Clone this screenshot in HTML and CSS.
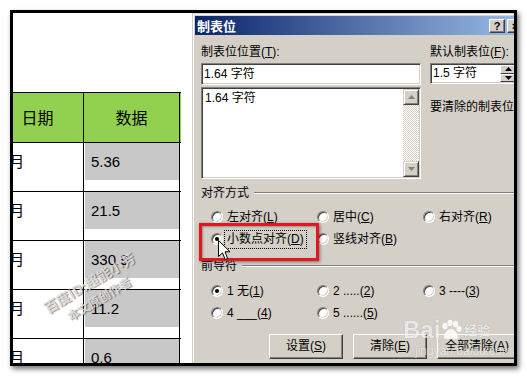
FILE: index.html
```html
<!DOCTYPE html>
<html lang="zh-CN">
<head>
    <meta charset="UTF-8">
    <title>制表位</title>
    <link rel="stylesheet" href="styles.css">
</head>
<body>
    <div class="frame">
        <div class="doc">
            <div class="sheet">
                <div class="row head">
                    <div class="c1">日期</div>
                    <div class="c2">数据</div>
                </div>
                <div class="row">
                    <div class="c1">1月</div>
                    <div class="c2"><div class="val">5.36</div></div>
                </div>
                <div class="row">
                    <div class="c1">2月</div>
                    <div class="c2"><div class="val">21.5</div></div>
                </div>
                <div class="row">
                    <div class="c1">3月</div>
                    <div class="c2"><div class="val">330.9</div></div>
                </div>
                <div class="row">
                    <div class="c1">4月</div>
                    <div class="c2"><div class="val">11.2</div></div>
                </div>
                <div class="row">
                    <div class="c1">5月</div>
                    <div class="c2"><div class="val">0.6</div></div>
                </div>
            </div>
        </div>

        <div class="dialog">
            <div class="titlebar">
                <span class="title">制表位</span>
                <span class="tb-btns">
                    <span class="tb-btn">?</span>
                    <span class="tb-btn">×</span>
                </span>
            </div>
            <div class="body">
                <div class="top">
                    <div class="col-left">
                        <div class="label">制表位位置(<u>T</u>):</div>
                        <div class="field">1.64 字符</div>
                        <div class="list">
                            <div class="list-items">
                                <div class="item">1.64 字符</div>
                            </div>
                            <div class="scroll">
                                <div class="sbtn">
                                    <svg width="7" height="4" viewBox="0 0 7 4"><path d="M3.5 0 L7 4 L0 4 Z" fill="#808080"/></svg>
                                </div>
                                <div class="track"></div>
                                <div class="sbtn">
                                    <svg width="7" height="4" viewBox="0 0 7 4"><path d="M0 0 L7 0 L3.5 4 Z" fill="#808080"/></svg>
                                </div>
                            </div>
                        </div>
                    </div>
                    <div class="col-right">
                        <div class="label">默认制表位(<u>F</u>):</div>
                        <div class="field spin">
                            <span class="spin-text">1.5 字符</span>
                            <span class="spin-btns">
                                <span class="spin-btn">
                                    <svg width="7" height="4" viewBox="0 0 7 4"><path d="M3.5 0 L7 4 L0 4 Z" fill="#000"/></svg>
                                </span>
                                <span class="spin-btn">
                                    <svg width="7" height="4" viewBox="0 0 7 4"><path d="M0 0 L7 0 L3.5 4 Z" fill="#000"/></svg>
                                </span>
                            </span>
                        </div>
                        <div class="label clear-label">要清除的制表位:</div>
                    </div>
                </div>

                <div class="group first"><span>对齐方式</span><i class="rule"></i></div>
                <div class="radios">
                    <label class="opt"><span class="radio"></span><span>左对齐(<u>L</u>)</span></label>
                    <label class="opt"><span class="radio"></span><span>居中(<u>C</u>)</span></label>
                    <label class="opt"><span class="radio"></span><span>右对齐(<u>R</u>)</span></label>
                    <label class="opt"><span class="radio on"></span><span class="focus">小数点对齐(<u>D</u>)</span></label>
                    <label class="opt"><span class="radio"></span><span>竖线对齐(<u>B</u>)</span></label>
                </div>

                <div class="group"><span>前导符</span><i class="rule"></i></div>
                <div class="radios leaders">
                    <label class="opt"><span class="radio on"></span><span>1 无(<u>1</u>)</span></label>
                    <label class="opt"><span class="radio"></span><span>2 .....(<u>2</u>)</span></label>
                    <label class="opt"><span class="radio"></span><span>3 ----(<u>3</u>)</span></label>
                    <label class="opt"><span class="radio"></span><span>4 ___(<u>4</u>)</span></label>
                    <label class="opt"><span class="radio"></span><span>5 ......(<u>5</u>)</span></label>
                </div>

                <div class="buttons">
                    <span class="btn">设置(<u>S</u>)</span>
                    <span class="btn">清除(<u>E</u>)</span>
                    <span class="btn wide">全部清除(<u>A</u>)</span>
                </div>
            </div>
        </div>

        <!-- overlays: screenshot annotations -->
        <div class="highlight"></div>
        <svg class="cursor" width="13" height="21" viewBox="0 0 13 21">
            <path d="M0.5 0.5 L0.5 16.5 L4.5 12.8 L7.2 19.5 L9.6 18.5 L7 11.8 L12 11.8 Z" fill="#fff" stroke="#000" stroke-width="1"/>
        </svg>
        <div class="mark">百度ID:超能小芳<br><span class="mark-sub">本文原创作者</span></div>
        <div class="baidu">
            <div class="baidu-logo">Bai<svg width="22" height="22" viewBox="0 0 22 22"><g fill="#fff"><ellipse cx="5" cy="7" rx="2.6" ry="3.2"/><ellipse cx="10" cy="4" rx="2.6" ry="3.2"/><ellipse cx="15.5" cy="5" rx="2.6" ry="3.2"/><ellipse cx="19" cy="10" rx="2.4" ry="3"/><path d="M11 10 C7 10 4 15 4 18 C4 21 8 20 11 20 C14 20 18 21 18 18 C18 15 15 10 11 10 Z"/></g></svg><span class="baidu-jy">经验</span></div>
            <div class="baidu-url">jingyan.baidu.com</div>
        </div>
    </div>
</body>
</html>
```

FILE: styles.css
```css
body {
    margin: 0;
    padding: 10px;
    background: #fff;
    font-family: "Liberation Sans", "Noto Sans CJK SC", sans-serif;
}
.frame {
    position: relative;
    display: flex;
    width: 501px;
    height: 350px;
    border: 3px solid #000;
    overflow: hidden;
    box-shadow: 2px 3px 5px rgba(0, 0, 0, 0.55);
}

/* word document behind the dialog */
.doc {
    flex: none;
    width: 179px;
    padding-top: 79px;
    box-sizing: border-box;
    background: #fff;
    overflow: hidden;
}
.sheet {
    width: 193px;
    margin-left: -25px;
    color: #000;
}
.row {
    display: flex;
    height: 48px;
    border-top: 1px solid #000;
    font-size: 15px;
}
.row.head {
    height: 49px;
    background: #92d050;
}
.c1 {
    flex: none;
    width: 96px;
    padding-left: 13px;
    box-sizing: border-box;
    border-right: 1px solid #000;
    line-height: 37px;
    white-space: nowrap;
}
.c2 {
    flex: none;
    width: 95px;
    border-right: 1px solid #000;
}
.head .c1,
.head .c2 {
    padding: 0;
    text-align: center;
    line-height: 49px;
    font-size: 16px;
    font-family: "Noto Sans CJK SC", sans-serif;
}
.head .c1 {
    padding-left: 4px;
}
.val {
    margin-left: 1px;
    height: 37px;
    padding-left: 6px;
    background: #c8c8c8;
    line-height: 37px;
}

/* tab stops dialog */
.dialog {
    flex: none;
    width: 360px;
    padding: 2px;
    box-sizing: border-box;
    background: #d4d0c8;
    border: 1px solid #d4d0c8;
    box-shadow: inset 1px 1px #fff;
    font-size: 12px;
    line-height: 14px;
    color: #000;
}
.titlebar {
    display: flex;
    align-items: center;
    justify-content: space-between;
    height: 19px;
    padding: 0 26px 0 2px;
    background: linear-gradient(90deg, #0a246a, #a6caf0);
}
.title {
    color: #fff;
    font-weight: bold;
    font-size: 13px;
    font-family: "Noto Sans CJK SC", sans-serif;
}
.tb-btns {
    display: flex;
    gap: 2px;
}
.tb-btn {
    width: 16px;
    height: 14px;
    box-sizing: border-box;
    background: #d4d0c8;
    border: 1px solid;
    border-color: #fff #404040 #404040 #fff;
    box-shadow: inset -1px -1px #808080;
    font-size: 11px;
    font-weight: bold;
    line-height: 12px;
    text-align: center;
}
.body {
    padding: 10px 0 0 6px;
}
.top {
    display: flex;
    gap: 9px;
}
.col-left {
    width: 222px;
}
.label {
    height: 14px;
    margin-bottom: 4px;
    white-space: nowrap;
}
.field {
    height: 22px;
    padding-left: 2px;
    box-sizing: border-box;
    background: #fff;
    border: 1px solid;
    border-color: #808080 #fff #fff #808080;
    box-shadow: inset 1px 1px #404040, inset -1px -1px #d4d0c8;
    line-height: 20px;
    white-space: nowrap;
}
.list {
    display: flex;
    height: 92px;
    margin-top: 2px;
    padding: 2px;
    box-sizing: border-box;
    background: #fff;
    border: 1px solid;
    border-color: #808080 #fff #fff #808080;
    box-shadow: inset 1px 1px #404040, inset -1px -1px #d4d0c8;
}
.list-items {
    flex: 1;
    padding: 1px 0 0 1px;
}
.item {
    line-height: 14px;
}
.scroll {
    display: flex;
    flex-direction: column;
    width: 16px;
    margin: -1px -1px -1px 0;
}
.sbtn {
    display: flex;
    align-items: center;
    justify-content: center;
    width: 16px;
    height: 16px;
    box-sizing: border-box;
    background: #d4d0c8;
    border: 1px solid;
    border-color: #d4d0c8 #404040 #404040 #d4d0c8;
    box-shadow: inset 1px 1px #fff, inset -1px -1px #808080;
}
.track {
    flex: 1;
    background: repeating-conic-gradient(#fff 0 25%, #d4d0c8 0 50%) 0 0 / 2px 2px;
}
.col-right {
    width: 120px;
}
.spin {
    display: flex;
    width: 88px;
    height: 21px;
    padding: 1px 1px 1px 2px;
}
.spin-text {
    flex: 1;
    line-height: 17px;
}
.spin-btns {
    display: flex;
    flex-direction: column;
    width: 16px;
}
.spin-btn {
    display: flex;
    flex: 1;
    align-items: center;
    justify-content: center;
    background: #d4d0c8;
    border: 1px solid;
    border-color: #fff #404040 #404040 #fff;
    box-sizing: border-box;
}
.clear-label {
    margin-top: 16px;
}
.group {
    display: flex;
    align-items: center;
    height: 14px;
    margin-top: 9px;
}
.group.first {
    margin-top: 7px;
}
.rule {
    flex: 1;
    margin-left: 5px;
    border-top: 1px solid #808080;
    border-bottom: 1px solid #fff;
}
.radios {
    display: grid;
    grid-template-columns: repeat(3, 106px);
    grid-auto-rows: 22px;
    margin-top: 6px;
    padding-left: 10px;
}
.radios.leaders {
    margin-top: 7px;
}
.opt {
    display: flex;
    align-items: center;
    gap: 4px;
    white-space: nowrap;
}
.radio {
    position: relative;
    flex: none;
    width: 12px;
    height: 12px;
    box-sizing: border-box;
    border-radius: 50%;
    background: #fff;
    border: 1px solid;
    border-color: #808080 #fff #fff #808080;
    box-shadow: inset 1px 1px #404040, inset -1px -1px #d4d0c8;
}
.radio.on::after {
    content: "";
    position: absolute;
    left: 3px;
    top: 3px;
    width: 4px;
    height: 4px;
    border-radius: 50%;
    background: #000;
}
.focus {
    margin: 0 -3px;
    padding: 0 2px;
    border: 1px dotted #000;
    line-height: 17px;
}
.buttons {
    display: flex;
    gap: 10px;
    margin: 10px 0 0 68px;
}
.btn {
    flex: none;
    width: 74px;
    height: 25px;
    box-sizing: border-box;
    background: #d4d0c8;
    border: 1px solid;
    border-color: #fff #404040 #404040 #fff;
    box-shadow: inset -1px -1px #808080;
    line-height: 23px;
    text-align: center;
    white-space: nowrap;
}
.btn.wide {
    width: 80px;
}

/* annotations laid over the screenshot */
.highlight {
    position: absolute;
    left: 186px;
    top: 210px;
    width: 120px;
    height: 38px;
    box-sizing: border-box;
    border: 3px solid #e3161d;
    box-shadow: 1px 1px 3px rgba(0, 0, 0, 0.45), inset 1px 1px 2px rgba(0, 0, 0, 0.3);
}
.cursor {
    position: absolute;
    left: 205px;
    top: 227px;
}
.mark {
    position: absolute;
    left: 11px;
    top: 259px;
    width: 140px;
    transform: rotate(-31deg);
    text-align: center;
    font-family: "Noto Sans CJK SC", sans-serif;
    font-size: 14px;
    font-weight: bold;
    line-height: 18px;
    color: rgba(225, 225, 225, 0.9);
    text-shadow: 1px 1px 1px rgba(0, 0, 0, 0.45);
}
.mark-sub {
    font-size: 12px;
}
.baidu {
    position: absolute;
    left: 390px;
    top: 303px;
    color: rgba(255, 255, 255, 0.85);
    text-shadow: 0 0 1px rgba(0, 0, 0, 0.3);
}
.baidu-logo {
    display: flex;
    align-items: center;
    font-size: 24px;
    font-weight: bold;
    line-height: 28px;
    opacity: 0.85;
}
.baidu-jy {
    font-size: 13px;
    margin-left: 2px;
    align-self: flex-start;
    font-family: "Noto Sans CJK SC", sans-serif;
}
.baidu-url {
    margin-left: 12px;
    font-size: 12px;
    line-height: 14px;
    opacity: 0.8;
}
```
